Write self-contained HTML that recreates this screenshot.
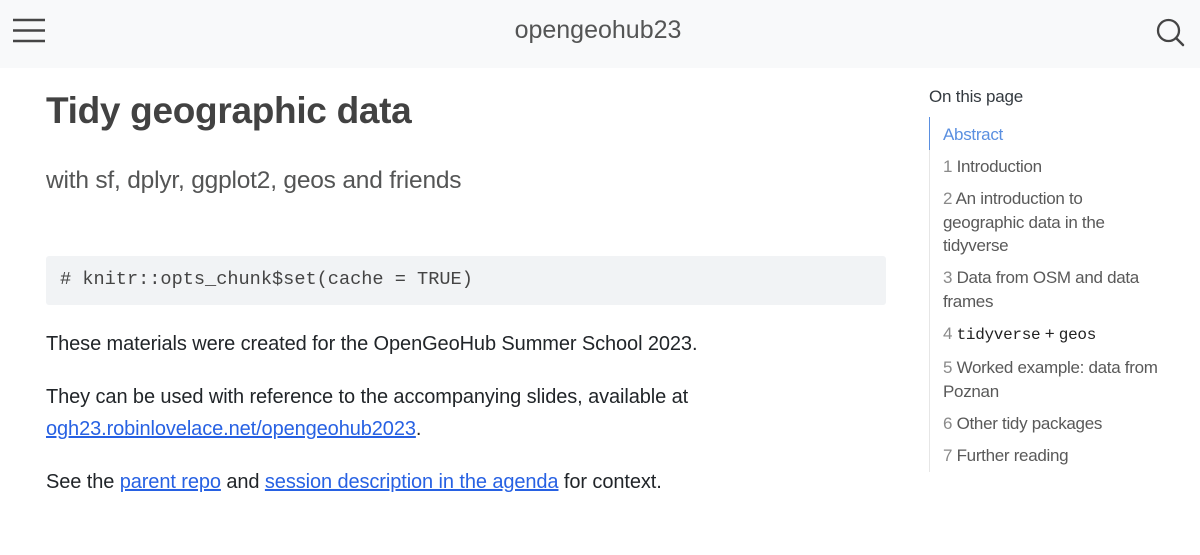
<!DOCTYPE html>
<html><head><meta charset="utf-8"><style>
body{margin:0;width:1200px;height:555px;background:#fff;font-family:"Liberation Sans",sans-serif;color:#343a40;position:relative;overflow:hidden}
.hdr{position:absolute;left:0;top:0;width:1200px;height:68px;background:#f8f9fa}
.hdr .t{position:absolute;left:0;width:1196px;top:16px;text-align:center;font-size:25px;color:#545555}
.ab{position:absolute;white-space:nowrap}
h1{position:absolute;left:46px;top:90px;margin:0;font-size:37px;font-weight:bold;color:#424242;letter-spacing:-0.3px}
.sub{left:46px;top:167px;font-size:24.5px;color:#545555;letter-spacing:-0.2px}
.code{position:absolute;left:46px;top:256px;width:840px;height:49px;background:#f1f3f5;border-radius:3px}
.code span{position:absolute;left:14px;top:13px;font-family:"Liberation Mono",monospace;font-size:18.6px;color:#444}
p{position:absolute;left:46px;margin:0;font-size:20px;line-height:32px;color:#212529;letter-spacing:-0.1px}
a{color:#2761e3;text-decoration:underline}
.toc{position:absolute;left:929px;top:87px;font-size:17px;color:#343a40;letter-spacing:-0.2px}
.tl{position:absolute;left:929px;top:117px;width:250px;border-left:1px solid #e6e6e6;height:355px}
.tl div{position:absolute;left:13px;font-size:17px;line-height:23.5px;color:#595959;letter-spacing:-0.3px;width:240px}
.n{color:#8a8a8a}
</style></head><body>
<div class="hdr">
<svg style="position:absolute;left:12px;top:18px" width="34" height="26"><g stroke="#454545" stroke-width="2.5"><line x1="1" y1="2" x2="33" y2="2"/><line x1="1" y1="12.5" x2="33" y2="12.5"/><line x1="1" y1="23" x2="33" y2="23"/></g></svg>
<div class="t">opengeohub23</div>
<svg style="position:absolute;left:1156px;top:18px" width="30" height="30"><circle cx="12.5" cy="12.5" r="10.5" fill="none" stroke="#454545" stroke-width="2.3"/><line x1="20" y1="20" x2="27" y2="27" stroke="#454545" stroke-width="2.5" stroke-linecap="round"/></svg>
</div>
<h1>Tidy geographic data</h1>
<div class="ab sub">with sf, dplyr, ggplot2, geos and friends</div>
<div class="code"><span># knitr::opts_chunk$set(cache = TRUE)</span></div>
<p style="top:328px">These materials were created for the OpenGeoHub Summer School 2023.</p>
<p style="top:381px">They can be used with reference to the accompanying slides, available at<br><a>ogh23.robinlovelace.net/opengeohub2023</a>.</p>
<p style="top:466px">See the <a>parent repo</a> and <a>session description in the agenda</a> for context.</p>
<div class="toc">On this page</div>
<div class="tl">
<div style="left:-1px;top:0;width:1px;height:33px;background:#5a8fe0;position:absolute"></div>
<div style="top:6px;color:#5a8fe0">Abstract</div>
<div style="top:38px"><span class="n">1</span> Introduction</div>
<div style="top:70px"><span class="n">2</span> An introduction to<br>geographic data in the<br>tidyverse</div>
<div style="top:149px"><span class="n">3</span> Data from OSM and data<br>frames</div>
<div style="top:205px;color:#222"><span class="n">4</span> <span style="font-family:'Liberation Mono',monospace;font-size:16px">tidyverse</span> + <span style="font-family:'Liberation Mono',monospace;font-size:16px">geos</span></div>
<div style="top:239px"><span class="n">5</span> Worked example: data from<br>Poznan</div>
<div style="top:295px"><span class="n">6</span> Other tidy packages</div>
<div style="top:327px"><span class="n">7</span> Further reading</div>
</div>
</body></html>
